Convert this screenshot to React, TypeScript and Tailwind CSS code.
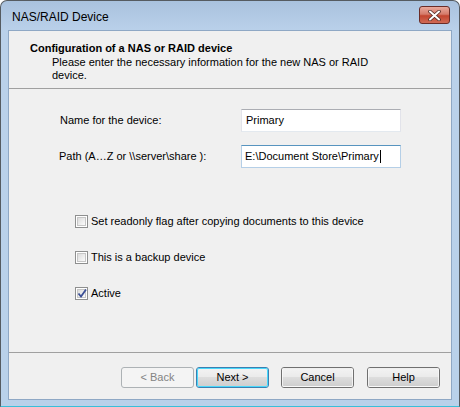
import React from 'react';

const font = { fontFamily: '"Liberation Sans", Arial, sans-serif' };

function CheckBox({ checked, label }: { checked?: boolean; label: string }) {
  return (
    <div className="flex items-center h-[15px]">
      <div className="w-[13px] h-[13px] border border-[#8e8f8f] bg-white p-[1px] flex">
        <div className="relative flex-1 bg-gradient-to-br from-[#dcdcdc] to-[#fbfbfb] border border-[#c6c6c6]">
          {checked && (
            <svg className="absolute -left-[1px] -top-[2px]" width="11" height="11" viewBox="0 0 11 11">
              <path d="M1.5 5.5 L4 8.5 L9 1.5" fill="none" stroke="#3b4f95" strokeWidth="1.8" />
            </svg>
          )}
        </div>
      </div>
      <span className="ml-[3px] text-[11px] text-black leading-[13px]">{label}</span>
    </div>
  );
}

function Button({ children, variant }: { children: React.ReactNode; variant?: 'default' | 'disabled' }) {
  if (variant === 'disabled') {
    return (
      <div className="w-[73px] h-[21px] rounded-[3px] border border-[#adb2b5] bg-[#f4f4f4] flex items-center justify-center text-[11px] text-[#838383]">
        {children}
      </div>
    );
  }
  return (
    <div
      className={
        'w-[73px] h-[21px] rounded-[3px] border flex ' +
        (variant === 'default' ? 'border-[#3c7fb1]' : 'border-[#707070]')
      }
    >
      <div
        className={
          'flex-1 rounded-[2px] border flex items-center justify-center text-[11px] text-black bg-[linear-gradient(#f2f2f2_0%,#ebebeb_45%,#dddddd_50%,#cfcfcf_100%)] ' +
          (variant === 'default' ? 'border-[#48d8fb]' : 'border-[#fcfcfc]/70')
        }
      >
        {children}
      </div>
    </div>
  );
}

export default function App() {
  return (
    <div className="w-[460px] h-[407px] bg-white" style={font}>
      <div className="w-[460px] h-[407px] rounded-t-[7px] border border-[#555b61] border-b-[#39bfd9] bg-[linear-gradient(#a9c2de_0px,#bad1ea_30px,#b9d1ea_100%)] flex flex-col">
        {/* title bar */}
        <div className="h-[29px] flex items-center pl-[11px] pr-[9px]">
          <span className="text-[12px] text-black flex-1 pt-[2px]">NAS/RAID Device</span>
          <div className="w-[31px] h-[18px] mt-[-1px] rounded-[3px] border border-[#6b2c27] bg-[linear-gradient(#e9a99c_0%,#d57b6a_45%,#c3452f_55%,#d06a55_100%)] flex items-center justify-center">
            <svg width="13" height="11" viewBox="0 0 13 11">
              <path d="M2 1.5 L11 9.5 M11 1.5 L2 9.5" stroke="#4f2a25" strokeWidth="3.6" strokeLinecap="round" />
              <path d="M2 1.5 L11 9.5 M11 1.5 L2 9.5" stroke="#ffffff" strokeWidth="2" strokeLinecap="round" />
            </svg>
          </div>
        </div>

        {/* client area */}
        <div className="mx-[7px] h-[370px] border border-[#8fa8c5] bg-[#f0f0f0] flex flex-col">
          {/* header */}
          <div className="h-[58px] border-b border-[#a0a0a0] pl-[21px] pt-[10px]">
            <div className="text-[11px] font-bold text-black leading-[14px]">Configuration of a NAS or RAID device</div>
            <div className="pl-[22px] pt-[1px] text-[11px] text-black leading-[13px] w-[340px]">
              Please enter the necessary information for the new NAS or RAID device.
            </div>
          </div>

          {/* body */}
          <div className="flex-1 flex flex-col pt-[20px]">
            <div className="flex items-center">
              <div className="w-[232px] pl-[51px] text-[11px] text-black">Name for the device:</div>
              <div className="w-[160px] h-[23px] bg-white border border-[#e2e3ea] border-t-[#abadb3] border-b-[#e3e9ef] flex items-center pl-[4px] text-[11px] text-black">
                Primary
              </div>
            </div>
            <div className="flex items-center mt-[13px]">
              <div className="w-[232px] pl-[50px] text-[11px] text-black">Path (A…Z or \\server\share ):</div>
              <div className="w-[160px] h-[23px] bg-white border border-[#b5cfe7] border-t-[#5794bf] flex items-center pl-[3px] text-[11px] text-black">
                E:\Document Store\Primary
                <span className="w-[1px] h-[13px] bg-black ml-[1px]" />
              </div>
            </div>

            <div className="flex flex-col gap-[21px] pl-[66px] mt-[46px]">
              <CheckBox label="Set readonly flag after copying documents to this device" />
              <CheckBox label="This is a backup device" />
              <CheckBox checked label="Active" />
            </div>
          </div>

          {/* footer */}
          <div className="h-[47px] border-t border-[#a0a0a0] flex justify-end pt-[14px] pr-[11px]">
            <Button variant="disabled">&lt; Back</Button>
            <div className="ml-[2px]">
              <Button variant="default">Next &gt;</Button>
            </div>
            <div className="ml-[12px]">
              <Button>Cancel</Button>
            </div>
            <div className="ml-[13px]">
              <Button>Help</Button>
            </div>
          </div>
        </div>
      </div>
    </div>
  );
}
